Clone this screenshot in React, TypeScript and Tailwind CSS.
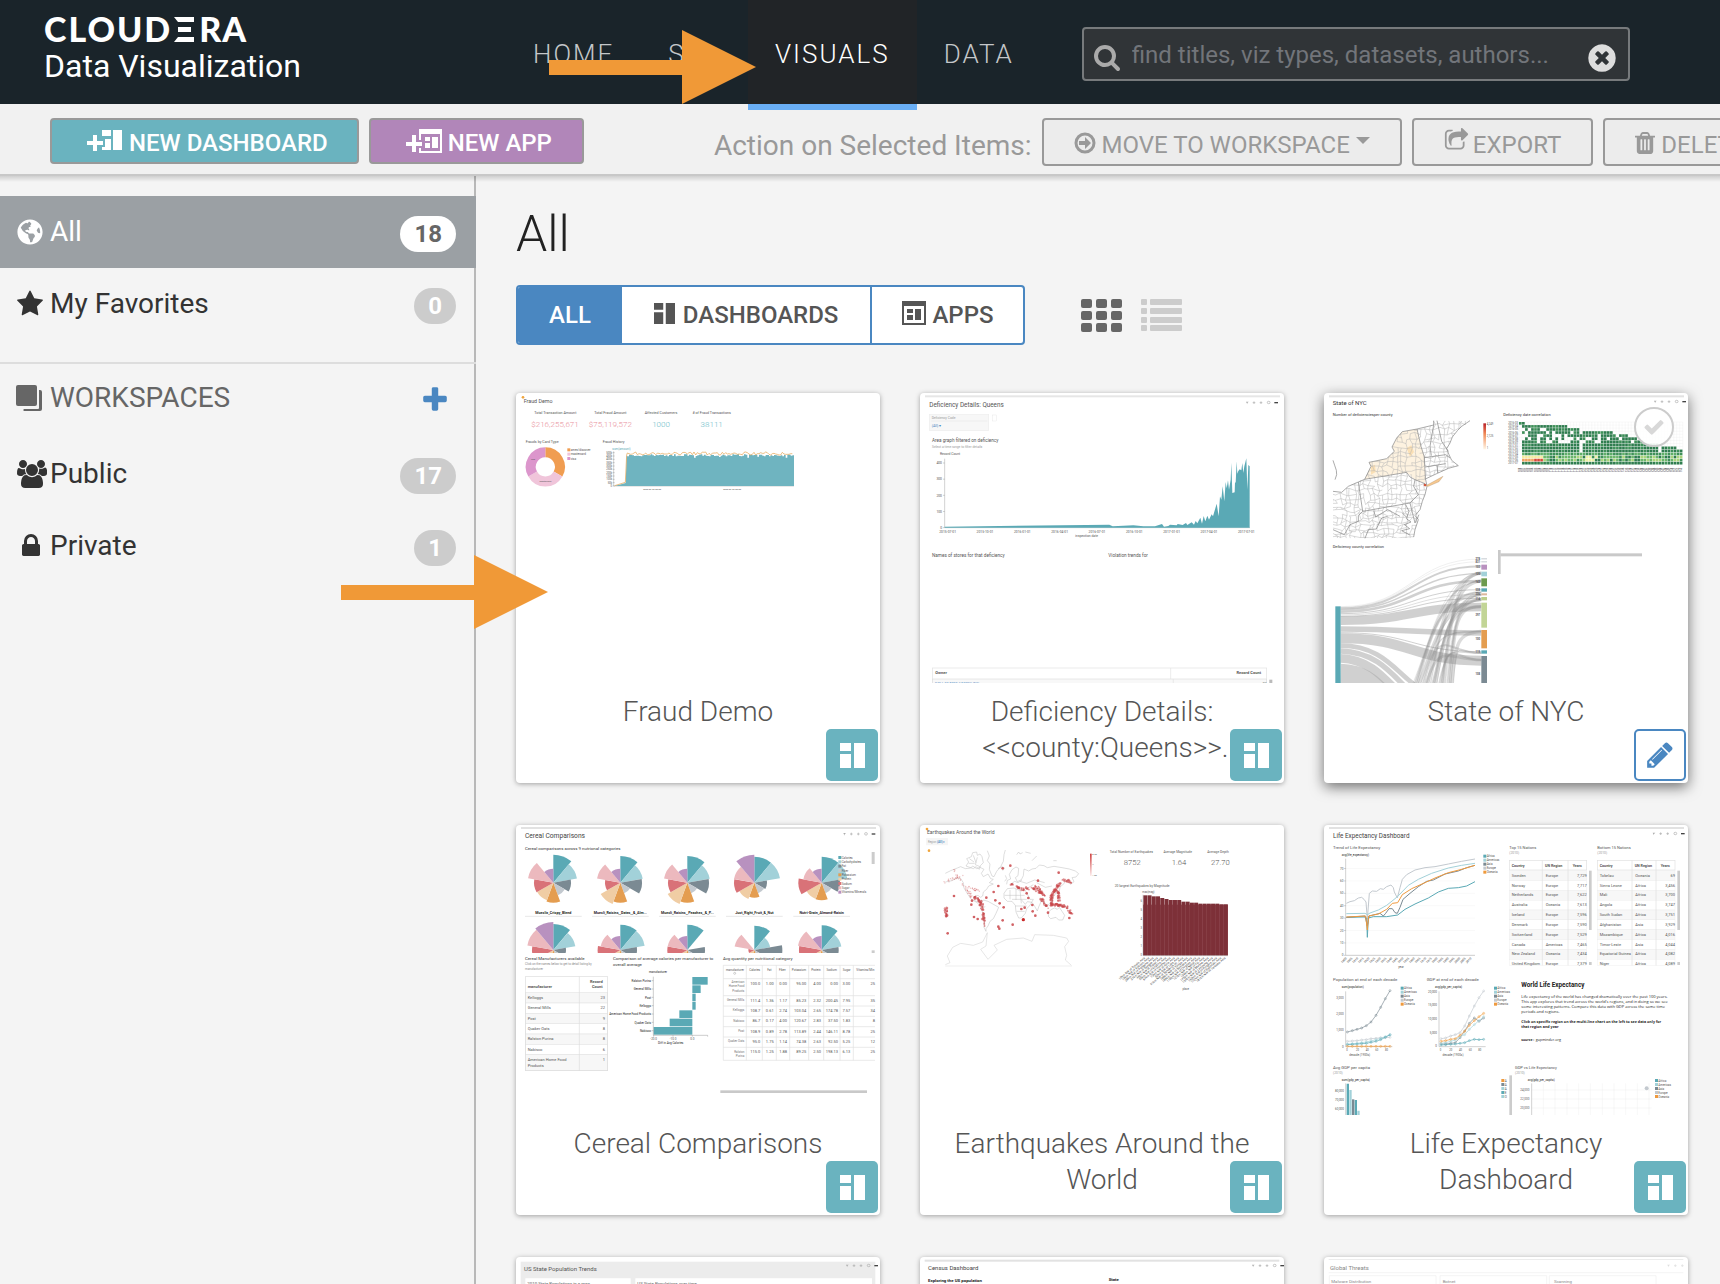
import type { ReactNode } from "react";
import { FaGlobeAmericas } from "react-icons/fa";

/* ---------- palette for the miniature charts ---------- */
const TEAL = "#5aa9b5";
const LIGHT_TEAL = "#a2d1d9";
const SLATE = "#7b8a93";
const SILVER = "#c3c9cf";
const ORANGE = "#e49d50";
const SAND = "#f0cda4";
const RED = "#d97278";
const PINK = "#ecb9be";
const PURPLE = "#b891bf";

function random(seed: number) {
  let s = seed;
  return () => {
    s = (s * 16807) % 2147483647;
    return s / 2147483647;
  };
}

/* ---------- icons ---------- */
const PATHS = {
  search:
    "M1216 832q0-185-131.500-316.500t-316.500-131.500-316.500 131.500-131.500 316.500 131.500 316.500 316.500 131.500 316.500-131.500 131.500-316.500zm512 832q0 52-38 90t-90 38q-54 0-90-38l-343-342q-179 124-399 124-143 0-273.500-55.500t-225-150-150-225-55.500-273.500 55.500-273.500 150-225 225-150 273.500-55.500 273.500 55.500 225 150 150 225 55.500 273.500q0 220-124 399l343 343q37 37 37 90z",
  clear:
    "M1277 1122q0-26-19-45l-181-181 181-181q19-19 19-45 0-27-19-46l-90-90q-19-19-46-19-26 0-45 19l-181 181-181-181q-19-19-45-19-27 0-46 19l-90 90q-19 19-19 46 0 26 19 45l181 181-181 181q-19 19-19 45 0 27 19 46l90 90q19 19 46 19 26 0 45-19l181-181 181 181q19 19 45 19 27 0 46-19l90-90q19-19 19-46zm387-226q0 209-103 385.500t-279.500 279.500-385.500 103-385.500-103-279.500-279.500-103-385.500 103-385.500 279.500-279.500 385.500-103 385.500 103 279.500 279.500 103 385.500z",
  star: "M1728 647q0 22-26 48l-363 354 86 500q1 7 1 20 0 21-10.500 35.500t-30.500 14.500q-19 0-40-12l-449-236-449 236q-22 12-40 12-21 0-31.500-14.500t-10.500-35.500q0-6 2-20l86-500-364-354q-25-27-25-48 0-37 56-46l502-73 225-455q19-41 49-41t49 41l225 455 502 73q56 9 56 46z",
  lock: "M640 768h512v-192q0-106-75-181t-181-75-181 75-75 181v192zm832 96v576q0 40-28 68t-68 28h-960q-40 0-68-28t-28-68v-576q0-40 28-68t68-28h32v-192q0-184 132-316t316-132 316 132 132 316v192h32q40 0 68 28t28 68z",
  plus: "M1600 736v192q0 40-28 68t-68 28h-416v416q0 40-28 68t-68 28h-192q-40 0-68-28t-28-68v-416h-416q-40 0-68-28t-28-68v-192q0-40 28-68t68-28h416v-416q0-40 28-68t68-28h192q40 0 68 28t28 68v416h416q40 0 68 28t28 68z",
  check:
    "M1671 566q0 40-28 68l-724 724-136 136q-28 28-68 28t-68-28l-136-136-362-362q-28-28-28-68t28-68l136-136q28-28 68-28t68 28l294 295 656-657q28-28 68-28t68 28l136 136q28 28 28 68z",
  pencil:
    "M491 1536l91-91-235-235-91 91v107h128v128h107zm523-928q0-22-22-22-10 0-17 7l-542 542q-7 7-7 17 0 22 22 22 10 0 17-7l542-542q7-7 7-17zm-54-192l416 416-832 832h-416v-416zm683 96q0 53-37 90l-166 166-416-416 166-165q36-38 90-38 53 0 91 38l235 234q37 39 37 91z",
  trash:
    "M704 1376v-704q0-14-9-23t-23-9h-64q-14 0-23 9t-9 23v704q0 14 9 23t23 9h64q14 0 23-9t9-23zm256 0v-704q0-14-9-23t-23-9h-64q-14 0-23 9t-9 23v704q0 14 9 23t23 9h64q14 0 23-9t9-23zm256 0v-704q0-14-9-23t-23-9h-64q-14 0-23 9t-9 23v704q0 14 9 23t23 9h64q14 0 23-9t9-23zm-544-992h448l-48-117q-7-9-17-11h-317q-10 2-17 11zm928 32v64q0 14-9 23t-23 9h-96v948q0 83-47 143.500t-113 60.500h-832q-66 0-113-58.500t-47-141.500v-952h-96q-14 0-23-9t-9-23v-64q0-14 9-23t23-9h309l70-167q15-37 54-63t79-26h320q40 0 79 26t54 63l70 167h309q14 0 23 9t9 23z",
  share:
    "M1472 989v259q0 119-84.5 203.500t-203.500 84.500h-832q-119 0-203.500-84.500t-84.500-203.500v-832q0-119 84.500-203.500t203.500-84.500h255q13 0 22.500 9.500t9.500 22.500q0 27-26 32-77 26-133 60-10 4-16 4h-112q-66 0-113 47t-47 113v832q0 66 47 113t113 47h832q66 0 113-47t47-113v-214q0-19 18-29 28-13 54-37 16-16 35-8 21 9 21 29zm237-496l-384 384q-18 19-45 19-12 0-25-5-39-17-39-59v-192h-160q-323 0-438 131-119 137-74 473 3 23-20 34-8 2-12 2-16 0-26-13-10-14-21-31t-39.500-68.500-49.500-99.500-38.500-114-17.500-122q0-49 3.500-91t14-90 28-88 47-81.500 68.500-74 94.500-61.500 124.500-48.500 159.500-30.500 196.500-11h160v-192q0-42 39-59 13-5 25-5 26 0 45 19l384 384q19 19 19 45t-19 45z",
};

function Glyph({ name, className, box = "0 0 1792 1792" }: { name: keyof typeof PATHS; className: string; box?: string }) {
  return (
    <svg viewBox={box} className={className} fill="currentColor" aria-hidden="true">
      <path d={PATHS[name]} />
    </svg>
  );
}

function UsersIcon() {
  return (
    <svg viewBox="0 0 1984 1792" className="h-[28px] w-[31px]" fill="currentColor" aria-hidden="true">
      <path d="M657 896q-162 5-265 128h-134q-82 0-138-40.5t-56-118.500q0-353 124-353 6 0 43.500 21t97.500 42.500 119 21.500q67 0 133-23-5 37-5 66 0 159 93 293zm1071 637q0 120-73 189.500t-194 69.500h-874q-121 0-194-69.500t-73-189.500q0-53 3.500-103.500t14-109 26.500-108.500 43-97.500 62-81 85.500-53.500 111.500-20q10 0 43 21.500t73 48 107 48 135 21.500 135-21.500 107-48 73-48 43-21.500q61 0 111.500 20t85.500 53.500 62 81 43 97.500 26.500 108.500 14 109 3.500 103.500zm-1024-1277q0 106-75 181t-181 75-181-75-75-181 75-181 181-75 181 75 75 181zm704 384q0 159-112.500 271.500t-271.500 112.500-271.500-112.500-112.500-271.500 112.500-271.500 271.500-112.500 271.500 112.500 112.500 271.500zm576 225q0 78-56 118.500t-138 40.500h-134q-103-123-265-128 93-134 93-293 0-29-5-66 66 23 133 23 59 0 119-21.500t97.500-42.500 43.500-21q124 0 124 353zm-128-609q0 106-75 181t-181 75-181-75-75-181 75-181 181-75 181 75 75 181z" />
    </svg>
  );
}

function DashboardIcon({ className }: { className: string }) {
  return (
    <svg viewBox="0 0 25 25" className={className} fill="currentColor" aria-hidden="true">
      <path d="M0 0h11v8H0zM0 11h11v14H0zM14 0h11v25H14z" />
    </svg>
  );
}

function AppIcon({ className }: { className: string }) {
  return (
    <svg viewBox="0 0 24 24" className={className} fill="currentColor" aria-hidden="true">
      <path fillRule="evenodd" d="M0 0h24v24H0zM2 5v17h20V5z" />
      <path d="M5 8h6v4H5zM5 14h6v5H5zM13 8h6v11h-6z" />
    </svg>
  );
}

function NewDashboardIcon() {
  return (
    <svg viewBox="0 0 36 22" className="h-[22px] w-[36px]" aria-hidden="true">
      <path fill="#fff" d="M15 0h9v6h-9zM15 9h9v11h-9zM26 0h9v20h-9z" />
      <path fill="#6ab3bf" d="M0 9h18v8H0z" />
      <path fill="#fff" d="M0 11h16v4H0zM6 5h4v16H6z" />
    </svg>
  );
}

function NewAppIcon() {
  return (
    <svg viewBox="0 0 36 24" className="h-[24px] w-[36px]" aria-hidden="true">
      <path fill="#fff" fillRule="evenodd" d="M13 0h23v24H13zM15 5v17h19V5z" />
      <path fill="#fff" d="M19 8h5v4h-5zM19 14h5v5h-5zM26 8h6v11h-6z" />
      <path fill="#b186b9" d="M0 11h17v8H0z" />
      <path fill="#fff" d="M0 13h16v4H0zM6 6h4v17H6z" />
    </svg>
  );
}

function GridIcon() {
  return (
    <svg viewBox="0 0 41 33" className="h-[33px] w-[41px]" fill="#666" aria-hidden="true">
      {[0, 12, 24].map((y) =>
        [0, 15, 30].map((x) => <rect key={x + "-" + y} x={x} y={y} width="11" height="9" rx="2" />)
      )}
    </svg>
  );
}

function ListIcon() {
  return (
    <svg viewBox="0 0 41 33" className="h-[33px] w-[41px]" fill="#ccc" aria-hidden="true">
      {[0, 9, 18, 26].map((y) => (
        <g key={y}>
          <rect x="0" y={y} width="6" height="6" rx="1" />
          <rect x="9" y={y} width="32" height="6" rx="1" />
        </g>
      ))}
    </svg>
  );
}

/* ---------- miniature building blocks ---------- */
type TextProps = {
  x: number;
  y: number;
  s?: number;
  fill?: string;
  end?: boolean;
  mid?: boolean;
  bold?: boolean;
  light?: boolean;
  children: ReactNode;
};
function T({ x, y, s = 12, fill = "#555", end, mid, bold, light, children }: TextProps) {
  return (
    <text
      x={x}
      y={y}
      fontSize={s}
      fill={fill}
      fontWeight={bold ? 700 : light ? 300 : 400}
      textAnchor={end ? "end" : mid ? "middle" : "start"}
    >
      {children}
    </text>
  );
}

function Thumb({ box, label, children }: { box: string; label: string; children: ReactNode }) {
  return (
    <svg viewBox={box} className="block w-full" role="img" aria-label={label}>
      {children}
    </svg>
  );
}

function Tools({ x, y }: { x: number; y: number }) {
  return (
    <g stroke="#aaa" strokeWidth="2" fill="none">
      <path d={`M${x - 4} ${y - 3}h8l-4 4v4z`} fill="#aaa" stroke="none" />
      <path d={`M${x + 16} ${y}h8m-4 -4v8M${x + 37} ${y}h8m-4 -4v8`} />
      <rect x={x + 60} y={y - 4} width="8" height="7" rx="3" />
      <path d={`M${x + 81} ${y}h11`} stroke="#444" strokeWidth="4" />
    </g>
  );
}

function Legend({ x, y, items, step = 12 }: { x: number; y: number; items: [string, string][]; step?: number }) {
  return (
    <g>
      {items.map(([name, color], i) => (
        <g key={name + i}>
          <rect x={x} y={y + i * step} width="9" height="9" fill={color} />
          <T x={x + 10} y={y + 8 + i * step} s={9}>
            {name}
          </T>
        </g>
      ))}
    </g>
  );
}

/* ---------- miniatures ---------- */
function FraudThumb() {
  const rnd = random(7);
  const top: string[] = [];
  const line: string[] = [];
  for (let x = 352; x < 850; x += 5) {
    const y = 204 + Math.round(rnd() * 6) + (rnd() > 0.92 ? 6 : 0);
    top.push(`L${x} ${y}H${x + 5}`);
    line.push(`L${x} ${197 + Math.round(rnd() * 9)}`);
  }
  return (
    <Thumb box="18 20 1092 870" label="Fraud Demo preview">
      <circle cx="39" cy="33" r="4" fill="#f0a53c" />
      <T x={41} y={49} s={16}>Fraud Demo</T>
      <T x={136} y={83} s={11} mid>Total Transaction Amount</T>
      <T x={301} y={83} s={11} mid>Total Fraud Amount</T>
      <T x={453} y={83} s={11} mid>Affected Customers</T>
      <T x={605} y={83} s={11} mid>{"# of Fraud Transactions"}</T>
      <T x={135} y={121} s={24} mid light fill="#e98f9a">$216,255,671</T>
      <T x={301} y={121} s={24} mid light fill="#e98f9a">$75,119,572</T>
      <T x={453} y={121} s={24} mid light fill="#6dbcc8">1000</T>
      <T x={605} y={121} s={24} mid light fill="#6dbcc8">38111</T>
      <T x={47} y={170} s={11}>Frauds by Card Type</T>
      <T x={278} y={170} s={11}>Fraud History</T>
      <g fill="none" strokeWidth="30">
        <path d="M106 198A43.500 43.500 0 0 1 144 263" stroke="#f09d51" />
        <path d="M144 263A43.500 43.500 0 0 1 68 263" stroke="#f0c5da" />
        <path d="M68 263A43.500 43.500 0 0 1 106 198" stroke="#dc96cc" />
      </g>
      <T x={69} y={222} s={7} mid>visa</T>
      <T x={106} y={288} s={7} mid>mastercard</T>
      <Legend x={172} y={186} step={13} items={[["amex/discover", "#f09d51"], ["mastercard", "#f0c5da"], ["visa", "#dc96cc"]]} />
      <T x={307} y={190} s={9} fill={TEAL}>sum(amount)</T>
      {[0, 1, 2, 3, 4, 5, 6, 7, 8, 9, 10].map((i) => (
        <g key={i}>
          <T x={306} y={302 - i * 10} s={8} end>{i === 0 ? "0" : `${i * 50}k`}</T>
          <path d={`M308 ${299 - i * 10}h6`} stroke="#777" />
        </g>
      ))}
      <path d="M311 195V299H852" stroke="#777" fill="none" />
      <path d={`M314 299L347 290L350 208${top.join("")}V299Z`} fill="#6fb4c0" />
      <path d={`M314 298L346 288L350 206${line.join("")}`} fill="none" stroke="#e3a04b" strokeWidth="2" />
      <T x={426} y={310} s={7} mid>2020-06-30 00:00</T>
      <T x={666} y={310} s={7} mid>2020-06-30 00:00</T>
    </Thumb>
  );
}

function DeficiencyThumb() {
  const dates = ["2015-07-01", "2015-10-01", "2016-01-01", "2016-04-01", "2016-07-01", "2016-10-01", "2017-01-01", "2017-04-01", "2017-07-01"];
  return (
    <Thumb box="30 20 1092 870" label="Deficiency Details preview">
      <rect x="45" y="27" width="1065" height="6" fill="#e6e6e6" />
      <T x={58} y={62} s={19}>Deficiency Details: Queens</T>
      <Tools x={1012} y={49} />
      <rect x="58" y="85" width="178" height="48" fill="#f7f7f7" stroke="#eee" strokeWidth="2" />
      <path d="M64 104h168" stroke="#ddd" />
      <T x={65} y={98} s={10} fill="#999">Deficiency Code</T>
      <T x={65} y={123} s={11} fill="#4a87c1">(All) ▾</T>
      <rect x="247" y="86" width="13" height="18" fill="none" stroke="#ddd" />
      <T x={66} y={166} s={14}>Area graph filtered on deficiency</T>
      <T x={66} y={186} s={10} fill="#999">Select a time range to filter details</T>
      <T x={90} y={207} s={10}>Record Count</T>
      {[0, 100, 200, 300, 400].map((v) => (
        <g key={v}>
          <T x={96} y={428 - v * 0.485} s={10} end>{v}</T>
          <path d={`M99 ${424 - v * 0.485}h5`} stroke="#777" />
        </g>
      ))}
      <path d="M104 217V424H1020" fill="none" stroke="#777" />
      <path
        fill={TEAL}
        d="M104 424V421L598 415L608 420L640 418L670 417L700 420L735 420L756 413L762 421L775 419L780 415L800 417L803 413L818 416L828 410L832 416L845 408L852 415L857 404L862 411L871 394L876 412L881 389L886 405L892 388L897 400L905 384L909 390L920 352L926 390L930 330L934 340L938 300L943 345L947 287L950 306L954 282L957 310L962 280L964 229L967 320L974 318L975 287L977 290L980 225L982 262L985 254L989 249L994 252L997 230L1000 260L1003 240L1009 216L1012 310L1015 236L1019 240V424Z"
      />
      {dates.map((d, i) => (
        <T key={d} x={113 + i * 112} y={439} s={10} mid>{d}</T>
      ))}
      <T x={530} y={451} s={10} mid>inspection date</T>
      <T x={66} y={512} s={14}>Names of stores for that deficiency</T>
      <T x={595} y={512} s={14}>Violation trends for</T>
      <rect x="67" y="845" width="1003" height="60" fill="none" stroke="#e2e2e2" strokeWidth="2" />
      <rect x="67" y="878" width="1003" height="20" fill="#f8f8f8" stroke="#ddd" strokeWidth="2" />
      <path d="M782 845v33M790 878v20" stroke="#e2e2e2" strokeWidth="2" />
      <T x={76} y={864} s={12} bold>Owner</T>
      <T x={1053} y={864} s={12} end bold>Record Count</T>
      <T x={75} y={897} s={11} fill="#4a87c1">DOLLAR TREE STORES INC</T>
      <T x={1070} y={897} s={11} end>32</T>
      <rect x="1078" y="880" width="9" height="10" fill="#bbb" />
    </Thumb>
  );
}

const LAND =
  "M149 279L168 240L162 228L215 217L238 195L231 182L245 155L262 136L306 128L356 116L354 103H440L465 103L450 116L428 130L412 152L405 170L395 187L402 205L405 220L430 238L400 246L395 250L365 262L331 275L336 300L330 325L322 345L315 370L310 400L300 430L296 456H54V315L80 318L100 300L130 285Z";

function countyMesh() {
  const rnd = random(11);
  const pts: [number, number][][] = [];
  for (let r = 0; r < 30; r++) {
    const row: [number, number][] = [];
    for (let c = 0; c < 32; c++) {
      const y = r > 18 ? 100 + 18 * 14 + (r - 18) * 11 : 100 + r * 14;
      row.push([50 + c * 14 + (rnd() - 0.5) * 11, y + (rnd() - 0.5) * 10]);
    }
    pts.push(row);
  }
  let d = "";
  for (let r = 0; r < 29; r++)
    for (let c = 0; c < 31; c++) {
      const p = pts[r][c];
      const right = pts[r][c + 1];
      const down = pts[r + 1][c];
      if (rnd() > 0.14) d += `M${p[0].toFixed(0)} ${p[1].toFixed(0)}L${right[0].toFixed(0)} ${right[1].toFixed(0)}`;
      if (rnd() > 0.14) d += `M${p[0].toFixed(0)} ${p[1].toFixed(0)}L${down[0].toFixed(0)} ${down[1].toFixed(0)}`;
    }
  return d;
}

const SANKEY_NODES: [number, number, string, string][] = [
  [516, 3, SILVER, "278"],
  [525, 3, SILVER, "831"],
  [535, 15, PURPLE, "103"],
  [556, 14, LIGHT_TEAL, "125"],
  [576, 24, "#6d9a4e", "142"],
  [606, 10, TEAL, "508"],
  [621, 6, "#dcb79c", "306"],
  [632, 10, "#bccf8b", "114"],
  [649, 75, "#c2d596", "397"],
  [731, 55, ORANGE, "100"],
  [792, 10, TEAL, "119"],
  [809, 110, SLATE, "108"],
];

/* Links that leave the left bar: [left y, width, right y] */
const SANKEY_LINKS: [number, number, number][] = [
  [661, 1, 518],
  [663, 1, 526],
  [666, 6, 540],
  [670, 4, 562],
  [676, 8, 584],
  [682, 3, 610],
  [686, 2, 624],
  [690, 3, 636],
  [703, 26, 662],
  [728, 16, 740],
  [739, 3, 796],
  [756, 30, 823],
];

function NycThumb() {
  const rnd = random(5);
  const limits = [2, 16, 20, 31, 36, 39, 41, 46, 52, 54, 54, 54, 54, 54];
  const cells: ReactNode[] = [];
  limits.forEach((limit, r) => {
    for (let c = r === 0 ? 0 : 1; c < limit; c++) {
      const gap = r > 1 && r < 7 && rnd() < (c < limit - 9 ? 0.38 : 0.02);
      if (gap || (r > 6 && (c === 20 || c === 46) && r < 10)) continue;
      let fill = rnd() > 0.25 ? "#2f7d4f" : "#3f9159";
      if (r === 10) fill = rnd() > 0.5 ? "#5fae69" : "#3f9159";
      if (r === 11 || r === 12) {
        if (c < 8) fill = r === 11 ? "#f6eb9f" : c > 4 ? "#d9473a" : "#f3a25f";
        else if (rnd() > 0.3) fill = c > 21 && c < 27 ? "#eef2a4" : rnd() > 0.5 ? "#a9d47a" : "#6ab56a";
      }
      cells.push(<rect key={`${r}-${c}`} x={612 + c * 9.1} y={107 + r * 9.2} width="8" height="8" fill={fill} />);
    }
  });
  return (
    <Thumb box="27 20 1092 870" label="State of NYC preview">
      <defs>
        <clipPath id="nyc-land">
          <path d={LAND} />
        </clipPath>
        <linearGradient id="nyc-scale" x1="0" y1="0" x2="0" y2="1">
          <stop offset="0" stopColor="#b9202a" />
          <stop offset="0.4" stopColor="#f08a57" />
          <stop offset="1" stopColor="#fff6e6" />
        </linearGradient>
      </defs>
      <rect x="42" y="27" width="1065" height="6" fill="#e2e2e2" />
      <T x={53} y={57} s={18} fill="#333">State of NYC</T>
      <Tools x={1021} y={46} />
      <T x={53} y={89} s={12} fill="#333">Number of deficienciesper county</T>
      <T x={565} y={89} s={12} fill="#333">Deficiency date correlation</T>
      <path
        fill="#fdf2e0"
        d="M149 279L168 240L162 228L215 217L238 195L231 182L245 155L262 136L306 128L318 180L328 212L331 290L300 280L275 258Z"
      />
      <path fill="#fbe0b5" d="M168 240l12-5 2 22-14 8zM275 185l14-8 8 20-12 14z" />
      <g clipPath="url(#nyc-land)" fill="none">
        <path d={countyMesh()} stroke="#b4b4b4" strokeWidth="1.5" />
      </g>
      <g fill="none" stroke="#808080" strokeWidth="2">
        <path d="M54 315L80 318L100 300L130 287L149 279L168 240L162 228L215 217L238 195L231 182L245 155L262 136L306 128L356 116V103" />
        <path d="M149 279L275 258L285 272L300 280L296 300L310 325L285 350L143 375L130 287M300 280L330 292M306 128L318 180L328 212L331 275M356 116L345 180L349 208M366 103L380 165L400 195M328 214L392 205L405 215M330 242L392 232M366 236L368 260" />
        <path d="M143 375L130 388V405L105 415L88 445L54 430M176 373L182 392L218 370L255 390M218 390L200 395L184 428L160 430L150 456" />
        <path d="M331 275L336 300L330 325L322 345L315 370L300 388L310 400L300 430L296 452M465 103L440 120L428 132L412 152L405 170L395 187L402 205L410 222L430 238L400 246L365 262L331 278M285 350L300 410L312 385" />
        <path d="M272 355l10 20-8 22 14 10-20 8 16 12-24 6 26 14M262 380l12 12M54 222q6 18 10 30t-4 28" />
      </g>
      <path d="M331 299L384 270L372 286L340 300Z" fill="#f6c88f" stroke="#a98d6c" />
      <circle cx="330" cy="296" r="4" fill="#d4583f" />
      <rect x="505" y="111" width="8" height="78" fill="url(#nyc-scale)" />
      <T x={515} y={115} s={8}>4,249</T>
      <T x={515} y={152} s={8}>2,125</T>
      <T x={515} y={188} s={8}>1</T>
      <g stroke="#eee">
        {[0, 1, 2, 3, 4, 5, 6, 7, 8, 9].map((i) => (
          <path key={i} d={`M612 ${107 + i * 9.2}H1103`} />
        ))}
        {Array.from({ length: 55 }, (_, i) => (
          <path key={i} d={`M${612 + i * 9.1} 107v90`} />
        ))}
      </g>
      {cells}
      {limits.map((_, i) => (
        <T key={i} x={609} y={114 + i * 9.2} s={8} end>{i < 7 ? `2016-0${i + 3}` : `2017-0${i - 6}`}</T>
      ))}
      {Array.from({ length: 54 }, (_, i) => (
        <text key={i} fontSize="8" fill="#333" transform={`translate(${619 + i * 9.1} 258) rotate(-90)`}>
          {100 + i}
        </text>
      ))}
      <T x={53} y={485} s={12} fill="#333">Deficiency county correlation</T>
      <g fill="none" stroke="#aaa" strokeOpacity="0.55">
        {SANKEY_LINKS.map(([y0, w, y1]) => (
          <path key={y0} strokeWidth={w} d={`M77 ${y0}C290 ${y0} 290 ${y1} 499 ${y1}`} />
        ))}
        <path strokeWidth="14" d="M77 778C220 778 250 880 350 930" />
        <path strokeWidth="16" d="M77 794C200 798 240 880 310 940" />
        <path strokeWidth="26" d="M77 816C170 820 210 880 270 940" />
        <path strokeWidth="60" d="M77 862C130 864 170 880 220 950" />
      </g>
      <g fill="none" stroke="#888" strokeOpacity="0.3">
        {Array.from({ length: 26 }, (_, i) => {
          const target = SANKEY_NODES[3 + (i % 9)];
          return (
            <path
              key={i}
              strokeWidth={2 + (i % 5) * 2}
              d={`M${290 + i * 5} 900C${350 + i * 3} ${760 - (i % 4) * 20} ${380 + i * 2} ${target[0] + 12} 499 ${target[0] + 4 + (i % 3) * 4}`}
            />
          );
        })}
      </g>
      <rect x="61" y="660" width="16" height="240" fill={TEAL} />
      {SANKEY_NODES.map(([y, h, color, label]) => (
        <g key={y}>
          <rect x="499" y={y} width="17" height={h} fill={color} />
          <T x={495} y={Math.min(y + h / 2 + 3, 872)} s={8} end bold>{label}</T>
        </g>
      ))}
      <rect x="549" y="491" width="8" height="72" fill="#c9c9c9" />
      <rect x="556" y="501" width="425" height="9" fill="#c9c9c9" />
    </Thumb>
  );
}

const ROSE_COLORS = [TEAL, LIGHT_TEAL, SLATE, SILVER, ORANGE, SAND, RED, PINK, PURPLE];
function Rose({ cx, cy, r }: { cx: number; cy: number; r: number[] }) {
  return (
    <g>
      {r.map((len, i) => {
        const a = (i * 40 - 90) * (Math.PI / 180);
        const b = ((i + 1) * 40 - 90) * (Math.PI / 180);
        const p = (t: number) => `${(cx + len * Math.cos(t)).toFixed(1)} ${(cy + len * Math.sin(t)).toFixed(1)}`;
        return <path key={i} fill={ROSE_COLORS[i]} d={`M${cx} ${cy}L${p(a)}A${len} ${len} 0 0 1 ${p(b)}Z`} />;
      })}
    </g>
  );
}

function CerealThumb() {
  const roses: [number, string, number[]][] = [
    [130, "Mueslix_Crispy_Blend", [84, 72, 53, 40, 60, 56, 58, 77, 42]],
    [331, "Muesli_Raisins,_Dates,_&_Alm...", [80, 68, 65, 34, 60, 68, 46, 71, 42]],
    [532, "Muesli_Raisins,_Peaches,_&_P...", [80, 68, 65, 34, 60, 68, 58, 71, 42]],
    [733, "Just_Right_Fruit_&_Nut", [78, 78, 38, 34, 45, 52, 61, 62, 84]],
    [935, "Nutri-Grain_Almond-Raisin", [78, 78, 55, 34, 53, 52, 70, 56, 42]],
  ];
  const lower: number[][] = [
    [78, 67, 38, 34, 40, 40, 64, 79, 84],
    [76, 74, 50, 34, 40, 40, 68, 60, 42],
    [76, 0, 53, 34, 40, 40, 60, 60, 42],
    [73, 48, 84, 34, 20, 20, 18, 60, 0],
    [74, 60, 51, 34, 40, 40, 68, 72, 42],
  ];
  const makers: [string, string][] = [["Kelloggs", "23"], ["General Mills", "22"], ["Post", "9"], ["Quaker Oats", "8"], ["Ralston Purina", "8"], ["Nabisco", "6"], ["American Home Food", "1"]];
  const bars: [string, number, number][] = [["Ralston Purina", 547, 593], ["General Mills", 547, 572], ["Post", 547, 557], ["Kelloggs", 547, 557], ["American Home Food Products", 508, 547], ["Quaker Oats", 479, 547], ["Nabisco", 431, 547]];
  const heads: [string, number][] = [["manufacturer", 675], ["Calories", 734], ["Fat", 778], ["Fiber", 817], ["Potassium", 867], ["Protein", 918], ["Sodium", 965], ["Sugar", 1010], ["Vitamins/Min", 1066]];
  const rows: [number, string, string[]][] = [
    [506, "Home Food", ["100.0", "1.00", "0.00", "95.00", "4.00", "0.00", "3.00", "25"]],
    [557, "General Mills", ["111.4", "1.36", "1.17", "85.23", "2.32", "200.45", "7.95", "35"]],
    [588, "Kelloggs", ["108.7", "0.61", "2.74", "103.04", "2.65", "174.78", "7.57", "34"]],
    [619, "Nabisco", ["86.7", "0.17", "4.00", "120.67", "2.83", "37.50", "1.83", "8"]],
    [650, "Post", ["108.9", "0.89", "2.78", "113.89", "2.44", "146.11", "8.78", "25"]],
    [681, "Quaker Oats", ["95.0", "1.75", "1.14", "74.38", "2.63", "92.50", "5.25", "12"]],
    [712, "Ralston", ["115.0", "1.25", "1.88", "89.25", "2.50", "198.13", "6.13", "25"]],
  ];
  const cols = [751, 791, 831, 889, 933, 984, 1021, 1095];
  return (
    <Thumb box="18 27 1092 870" label="Cereal Comparisons preview">
      <defs>
        <clipPath id="cereal-row">
          <rect x="18" y="300" width="1092" height="111" />
        </clipPath>
      </defs>
      <rect x="33" y="33" width="1065" height="6" fill="#e2e2e2" />
      <T x={45} y={66} s={20} fill="#444">Cereal Comparisons</T>
      <Tools x={1004} y={54} />
      <T x={45} y={101} s={13} fill="#333">Cereal comparisons across 9 nutrional categories</T>
      {roses.map(([x, name, r]) => (
        <g key={name}>
          <Rose cx={x} cy={200} r={r} />
          <T x={x} y={293} s={11} mid bold fill="#222">{name}</T>
          <path d={`M${x - 85} 301h170`} stroke="#ddd" strokeWidth="2" />
        </g>
      ))}
      <g clipPath="url(#cereal-row)">
        {lower.map((r, i) => (
          <Rose key={i} cx={roses[i][0]} cy={402} r={r} />
        ))}
      </g>
      <Legend
        x={985}
        y={120}
        step={13}
        items={[["Calories", TEAL], ["Carbohydrates", LIGHT_TEAL], ["Fat", SLATE], ["Fiber", SILVER], ["Potassium", ORANGE], ["Protein", SAND], ["Sodium", RED], ["Sugar", PINK], ["Vitamins/Minerals", PURPLE]]}
      />
      <rect x="1085" y="108" width="9" height="36" fill="#ccc" />
      <rect x="1085" y="403" width="9" height="8" fill="#ccc" />
      <T x={45} y={431} s={13} fill="#333">Cereal Manufacturers available</T>
      <T x={45} y={448} s={9} fill="#888">Click on the names below to get to detail listing by</T>
      <T x={45} y={462} s={9} fill="#888">manufacturer</T>
      <g stroke="#ddd" strokeWidth="2" fill="none">
        {makers.map((_, i) => (
          <rect key={i} x="46" y={530 + i * 31} width="247" height={i === 6 ? 48 : 31} fill={i % 2 ? "#fff" : "#f7f7f7"} stroke="#e6e6e6" />
        ))}
        <rect x="46" y="482" width="247" height="282" />
        <path d="M208 482v282" />
      </g>
      <T x={53} y={517} s={12} bold>manufacturer</T>
      <T x={278} y={500} s={12} bold end>Record</T>
      <T x={278} y={517} s={12} bold end>Count</T>
      {makers.map(([name, n], i) => (
        <g key={name}>
          <T x={53} y={549 + i * 31} s={12}>{name}</T>
          <T x={285} y={549 + i * 31} s={12} end>{n}</T>
        </g>
      ))}
      <T x={53} y={752} s={12}>Products</T>
      <T x={309} y={431} s={13} fill="#333">Comparison of average calories per manufacturer to</T>
      <T x={309} y={449} s={13} fill="#333">overall average</T>
      <T x={444} y={472} s={9} mid fill="#222">manufacturer</T>
      {bars.map(([name, a, b], i) => (
        <g key={name}>
          <rect x={a} y={483 + i * 25} width={b - a} height="23" fill={TEAL} />
          <T x={423} y={498 + i * 25} s={9} end fill="#222">{name}</T>
          <path d={`M425 ${494 + i * 25}h5`} stroke="#666" />
        </g>
      ))}
      <path d="M430 482V658H593M431 658v4M489 658v4M547 658v4M593 658v4" stroke="#666" fill="none" />
      <T x={431} y={671} s={9} mid>-20.0</T>
      <T x={489} y={671} s={9} mid>-10.0</T>
      <T x={547} y={671} s={9} mid>0.0</T>
      <T x={482} y={683} s={9} mid fill="#222">Diff in Avg Calories</T>
      <T x={639} y={431} s={13} fill="#333">Avg quantity per nutritional category</T>
      <g stroke="#e0e0e0" strokeWidth="2" fill="none">
        <path d="M1095 448H640V733H1095M640 488H1095M640 539H1095M640 570H1095M640 601H1095M640 632H1095M640 663H1095M640 694H1095M709 448V733M757 448V733M799 448V733M839 448V733M896 448V733M941 448V733M990 448V733M1030 448V733" />
      </g>
      {heads.map(([h, x]) => (
        <T key={h} x={x} y={464} s={9} mid>{h}</T>
      ))}
      <circle cx="674" cy="472" r="3" fill="none" stroke="#777" />
      {rows.map(([y, name, values]) => (
        <g key={name}>
          <T x={703} y={y + (name === "Home Food" ? 8 : -2)} s={9} end fill="#777">{name}</T>
          {values.map((v, i) => (
            <T key={i} x={cols[i]} y={y} s={12} end>{v}</T>
          ))}
        </g>
      ))}
      <T x={703} y={502} s={9} end fill="#777">American</T>
      <T x={703} y={527} s={9} end fill="#777">Products</T>
      <T x={703} y={722} s={9} end fill="#777">Purina</T>
      <rect x="631" y="823" width="440" height="8" fill="#c9c9c9" />
    </Thumb>
  );
}

const QUAKE_ARCS: [number, number, number, number, number][] = [
  [106, 198, 158, 178, 20],
  [130, 160, 158, 205, 14],
  [160, 208, 205, 225, 22],
  [165, 212, 185, 240, 18],
  [195, 244, 218, 262, 26],
  [212, 258, 222, 310, 30],
  [218, 300, 224, 328, 10],
  [108, 275, 108, 300, 26],
  [305, 205, 345, 225, 24],
  [345, 215, 378, 222, 18],
  [375, 205, 398, 235, 22],
  [385, 225, 405, 240, 18],
  [395, 250, 412, 275, 22],
  [425, 268, 425, 235, 34],
  [428, 235, 450, 200, 34],
  [458, 192, 484, 198, 16],
  [425, 266, 468, 270, 38],
  [468, 272, 484, 292, 12],
  [446, 225, 446, 255, 20],
];
const QUAKES: [number, number][] = [
  [278, 157], [301, 149], [446, 170], [265, 210], [251, 228], [229, 245], [256, 253], [269, 262], [281, 274], [132, 240], [186, 254], [184, 266], [192, 303], [203, 309], [278, 313], [308, 326], [355, 246], [350, 232], [384, 194], [367, 267], [368, 286], [376, 299], [334, 279], [344, 275], [113, 352], [265, 332], [268, 338], [414, 290], [478, 306], [482, 291],
];
const REGIONS = ["Tobelo", "Kokopo", "Panguna", "Iquique", "Illapel", "Kirakira", "Honshu", "Apia", "Lata", "Sandwich Isl.", "Tonga", "Sumatra", "Chiapas", "Nepal", "Fiji", "Muisne", "Lampung", "Porgera", "Saumlaki", "Vanuatu"];

function EarthquakeThumb() {
  const rnd = random(23);
  const dots: [number, number, number][] = [];
  QUAKE_ARCS.forEach(([x1, y1, x2, y2, n]) => {
    for (let i = 0; i < n; i++) {
      const t = rnd();
      dots.push([x1 + (x2 - x1) * t + (rnd() - 0.5) * 8, y1 + (y2 - y1) * t + (rnd() - 0.5) * 8, 2 + rnd() * 2]);
    }
  });
  const tops = [238, 238, 241, 241, 246, 249, 252, 252, 252, 257, 257, 260, 260, 263, 263, 263, 263, 263, 265, 265];
  return (
    <Thumb box="30 27 1092 870" label="Earthquakes Around the World preview">
      <defs>
        <linearGradient id="quake-scale" x1="0" y1="0" x2="0" y2="1">
          <stop offset="0" stopColor="#cf3f3f" />
          <stop offset="1" stopColor="#fdeeee" />
        </linearGradient>
      </defs>
      <circle cx="51" cy="39" r="4" fill="#f0a53c" />
      <T x={51} y={53} s={15}>Earthquakes Around the World</T>
      <rect x="48" y="66" width="66" height="22" rx="2" fill="#f5f5f5" />
      <T x={54} y={80} s={8} fill="#999">Region</T>
      <T x={81} y={80} s={9} bold fill="#4a87c1">(All) ▾</T>
      <circle cx="57" cy="104" r="4" fill="#f0a53c" />
      <g fill="none" stroke="#bdbdbd" strokeWidth="1.5">
        <path d="M106 172l16-8 20-8 10-4 14 6 16-2 6-6 12 8 10-4 12 6-8 12 6 10 14-8 8 14 8 2-12 10 12 4-14 6-6 10-10 8-2 12-6 4-8-6-12 4 2 12 10 4 6-4 2 12 8 8 6-2" />
        <path d="M106 198l20-4 14-8 12 2 8 12 2 16 12 20 10 14 14 8 8 6" />
        <path d="M168 150l8-12-6-10 14-6 4-12 12-2 2 10 8-4 6 8 4 18-8 8-4 12-10-8-8 6zM178 128l14 10M190 118l8 22M176 142h18M202 124l-6 22 14 6" />
        <path d="M232 104l6 16-6 14 8 10-2 16 8 20 6 2 8-16 12-14 8-16 2-20 4-14" />
        <path d="M212 262l8-10 14 4 18 10 14 8-8 18-8 16-10 8-6 14-6 8v8l-6-12 2-24-4-18-8-14z" />
        <path d="M290 205l2-12 10-4-4-14 8-14 12-8 8 4-2 22-8 6 6 12 12-6 6-12 2-20 14 6 10-6 12-2 10-10 14 2 10 6 20-4 24 4 22 4 18 6 10 8-8 10-12 2 6 12-10 8-14-12-6 10-12 10-2 12-10 4-4 8-8 10 2 10-10 6-8 10-6-14-10-4-8 18-4 12-8-14-8-12-14-2-6 8-12-14" />
        <path d="M282 232l10-14 20-2 14 6 18-2 8 14 8 16 10 0-10 18-10 10-4 14-12 14-8 0-8-18-2-20-10-12-14 0-10-10zM300 222v28M318 218v34M284 238h60M330 222l4 40M306 250h44M316 270h34M320 286h24" />
        <path d="M414 290l10-10 10-4 8 4 6-6 8 12 8 12-6 14-12 0-8-8-16 4-6-6zM300 206l14-10 10 4 12-8M330 196l20 6 24-10 30 8M350 218l20-12M380 200l26 14 20-4M284 196l6-8-4-10" />
        <path d="M320 116l6-8 4 6 8-4M366 134l14-14M346 108l16 4M430 134h10M264 158l12-6 8 4-6 8" />
        <path d="M106 446L120 440L112 420L128 394L152 382L190 388L218 378L232 350L228 390L212 400L234 430L262 402L252 388L290 370L340 366L366 376L374 356L430 358L470 366L476 376L464 392L470 418L466 432L484 448" stroke="#ccc" />
        <path d="M106 450H486" stroke="#ddd" />
      </g>
      <g fill="#c9474a">
        {dots.map(([x, y, r], i) => (
          <circle key={i} cx={x} cy={y} r={x < 210 && y < 240 ? 2 : r} fillOpacity={x < 210 && y < 240 ? 0.35 : 0.55} />
        ))}
        {QUAKES.map(([x, y]) => (
          <circle key={x + "-" + y} cx={x} cy={y} r="4" fillOpacity="0.85" />
        ))}
        <circle cx="340" cy="311" r="5" fill="#c92a2a" />
      </g>
      <rect x="540" y="113" width="5" height="67" fill="url(#quake-scale)" />
      <T x={547} y={117} s={7}>8.20</T>
      <T x={547} y={148} s={7}>4</T>
      <T x={547} y={181} s={7}>1.00</T>
      <T x={664} y={111} s={10} mid>Total Number of Earthquakes</T>
      <T x={803} y={111} s={10} mid>Average Magnitude</T>
      <T x={924} y={111} s={10} mid>Average Depth</T>
      <T x={667} y={146} s={23} mid light>8752</T>
      <T x={807} y={146} s={23} mid light>1.64</T>
      <T x={931} y={146} s={23} mid light>27.70</T>
      <T x={614} y={214} s={10}>20 largest Earthquakes by Magnitude</T>
      <T x={697} y={232} s={8}>max(mag)</T>
      <rect x="699" y="266" width="255" height="152" fill="#9a5a62" />
      {tops.map((y, i) => (
        <rect key={i} x={700 + i * 12.7} y={y} width="12" height={418 - y} fill="#7d3038" />
      ))}
      <path d="M699 236V419H954" stroke="#888" fill="none" />
      {[0, 1, 2, 3, 4, 5, 6].map((i) => (
        <T key={i} x={696} y={421 - i * 27} s={8} end>{i}</T>
      ))}
      {REGIONS.map((name, i) => (
        <text key={name} fontSize="9" fill="#333" textAnchor="end" transform={`translate(${706 + i * 12.7} 427) rotate(-40)`}>
          {`${10 + i * 9}km NW of ${name}, Asia`}
        </text>
      ))}
      <T x={827} y={521} s={8} mid>place</T>
    </Thumb>
  );
}

const CONTINENTS: [string, string][] = [["Africa", TEAL], ["Americas", LIGHT_TEAL], ["Asia", SLATE], ["Europe", SILVER], ["Oceania", "#ef9a3d"]];

function NationTable({ x, c2, c3, right, rows }: { x: number; c2: number; c3: number; right: number; rows: [string, string, string][] }) {
  return (
    <g>
      <rect x={x} y="133" width={right - x} height="29" fill="#fff" stroke="#e0e0e0" strokeWidth="2" />
      {rows.map((_, i) => (
        <rect key={i} x={x} y={164 + i * 29.5} width={right - x} height={i === 9 ? 18 : 29.5} fill={i % 2 ? "#fff" : "#f7f7f7"} stroke="#e8e8e8" />
      ))}
      <path d={`M${c2 - 8} 133V448M${c3 - 12} 133V448`} stroke="#e0e0e0" strokeWidth="2" />
      <T x={x + 7} y={152} s={11} bold>Country</T>
      <T x={c2} y={152} s={11} bold>UN Region</T>
      <T x={c3 + 2} y={152} s={11} bold>Years</T>
      {rows.map(([a, b, c], i) => (
        <g key={a}>
          <T x={x + 7} y={182 + i * 29.5} s={12}>{a}</T>
          <T x={c2 + 2} y={182 + i * 29.5} s={12}>{b}</T>
          <T x={right} y={182 + i * 29.5} s={12} end>{c}</T>
        </g>
      ))}
      <rect x={right + 7} y="164" width="8" height="178" fill="#ccc" />
      <rect x={right + 7} y="438" width="8" height="9" fill="#ccc" />
    </g>
  );
}

function Series({ pts, color, w = 2 }: { pts: string; color: string; w?: number }) {
  return (
    <g>
      <polyline points={pts} fill="none" stroke={color} strokeWidth={w} />
      {pts.split(" ").map((p) => {
        const [x, y] = p.split(",");
        return <circle key={p} cx={x} cy={y} r="3" fill="none" stroke={color} strokeWidth="1.5" />;
      })}
    </g>
  );
}

function LifeThumb() {
  return (
    <Thumb box="27 27 1092 870" label="Life Expectancy Dashboard preview">
      <rect x="42" y="33" width="1065" height="6" fill="#e2e2e2" />
      <T x={54} y={65} s={19} fill="#444">Life Expectancy Dashboard</T>
      <Tools x={1017} y={53} />
      <T x={54} y={98} s={13}>Trend of Life Expectancy</T>
      <T x={80} y={121} s={9} fill="#222">avg(life_expectancy)</T>
      {[0, 1, 2, 3, 4, 5, 6, 7].map((i) => (
        <g key={i}>
          <path d={`M92 ${418 - i * 37.2}H480`} stroke="#eee" />
          <path d={`M87 ${418 - i * 37.2}h5`} stroke="#777" />
          <T x={85} y={421 - i * 37.2} s={9} end>{i * 10}</T>
        </g>
      ))}
      <path d="M92 128V418H480" fill="none" stroke="#777" />
      <g fill="none" strokeWidth="3">
        <path stroke={SILVER} d="M94 262L105 257L118 254L130 246L140 244L147 250L153 258L157 310L163 232L172 225L185 226L196 218L205 220L215 212L228 207L235 215L238 228L247 246L255 215L262 190L275 176L300 162L330 155L360 152L400 144L440 136L480 129" />
        <path stroke={LIGHT_TEAL} d="M94 293L150 292L157 296L165 291L190 282L215 268L240 248L255 234L280 208L310 190L350 172L400 156L440 148L480 142" />
        <path stroke={TEAL} d="M94 304L150 303L155 306L157 364L160 306L175 302L215 302L248 297L270 280L300 264L340 246L370 228L400 217L430 215L455 210L480 197" />
        <path stroke={SLATE} d="M94 304L150 300L157 330L162 300L195 292L205 300L212 292L222 278L232 278L240 290L247 292L255 274L264 250L285 232L310 212L335 196L355 192L390 174L430 165L455 155L480 148" />
        <path stroke="#ef9a3d" d="M94 303L152 300L157 342L161 300L190 294L215 280L232 262L248 260L262 236L290 218L330 200L360 186L400 170L440 160L480 148" />
      </g>
      <Legend x={505} y={116} items={CONTINENTS} />
      {Array.from({ length: 23 }, (_, i) => (
        <text key={i} fontSize="9" fill="#444" textAnchor="end" transform={`translate(${96 + i * 17} 428) rotate(-45)`}>
          {1900 + i * 5}
        </text>
      ))}
      <T x={258} y={455} s={9} mid>year</T>
      <T x={583} y={98} s={12}>Top 15 Nations</T>
      <T x={583} y={114} s={10} fill="#999">(2010)</T>
      <T x={847} y={98} s={12}>Bottom 15 Nations</T>
      <T x={847} y={114} s={10} fill="#999">(2010)</T>
      <NationTable
        x={583}
        c2={690}
        c3={771}
        right={815}
        rows={[["Sweden", "Europe", "7,729"], ["Norway", "Europe", "7,717"], ["Netherlands", "Europe", "7,622"], ["Australia", "Oceania", "7,613"], ["Iceland", "Europe", "7,596"], ["Denmark", "Europe", "7,590"], ["Switzerland", "Europe", "7,529"], ["Canada", "Americas", "7,465"], ["New Zealand", "Oceania", "7,434"], ["United Kingdom", "Europe", "7,379"]]}
      />
      <NationTable
        x={847}
        c2={959}
        c3={1035}
        right={1080}
        rows={[["Tokelau", "Oceania", "69"], ["Sierra Leone", "Africa", "3,456"], ["Mali", "Africa", "3,700"], ["Angola", "Africa", "3,747"], ["South Sudan", "Africa", "3,751"], ["Afghanistan", "Asia", "3,929"], ["Mozambique", "Africa", "4,016"], ["Timor-Leste", "Asia", "4,044"], ["Equatorial Guinea", "Africa", "4,082"], ["Niger", "Africa", "4,089"]]}
      />
      <T x={54} y={494} s={13}>Population at end of each decade</T>
      <T x={335} y={494} s={13}>GDP at end of each decade</T>
      <T x={80} y={517} s={9} fill="#222">sum(population)</T>
      <T x={360} y={517} s={9} fill="#222">avg(gdp_per_capita)</T>
      <path d="M92 526V692H232M372 526V692H512" fill="none" stroke="#777" />
      {["0", "1,000", "2,000", "3,000"].map((v, i) => (
        <T key={v} x={86} y={695 - i * 49} s={9} end>{v}</T>
      ))}
      {["0", "5,000", "10,000", "15,000", "20,000"].map((v, i) => (
        <T key={v} x={366} y={694 - i * 41} s={9} end>{v}</T>
      ))}
      <Series color={SLATE} pts="97,648 112,644 126,640 140,636 154,629 168,618 183,598 197,574 211,548 225,524" />
      <Series color={SILVER} pts="97,676 112,675 126,674 140,672 154,671 168,668 183,667 197,665 211,665 225,664" />
      <Series color={LIGHT_TEAL} pts="97,684 112,683 126,682 140,680 154,678 168,675 183,671 197,667 211,662 225,657" />
      <Series color={TEAL} pts="97,686 112,685 126,684 140,683 154,682 168,679 183,676 197,671 211,664 225,656" />
      <Series color="#ef9a3d" pts="97,691 112,691 126,691 140,691 154,691 168,691 183,691 197,691 211,691 225,691" />
      <Series color={SILVER} pts="378,668 392,666 407,660 421,656 435,650 449,630 463,600 478,570 492,545 506,525" />
      <Series color={SLATE} pts="378,684 392,684 407,682 421,680 435,665 449,645 463,622 478,606 492,616 506,606" />
      <Series color={LIGHT_TEAL} pts="378,682 392,680 407,676 421,672 435,662 449,656 463,640 478,626 492,614 506,602" />
      <Series color="#ef9a3d" pts="378,676 392,674 407,670 421,668 435,658 449,646 463,628 478,614 492,602 506,592" />
      <Series color={TEAL} pts="378,687 392,686 407,685 421,684 435,682 449,680 463,674 478,670 492,671 506,670" />
      <Legend x={257} y={512} items={CONTINENTS} />
      <Legend x={537} y={512} items={CONTINENTS} />
      {[0, 1, 2, 3, 4].map((i) => (
        <g key={i}>
          <T x={94 + i * 29} y={705} s={8}>{i * 20}</T>
          <T x={374 + i * 29} y={705} s={8}>{i * 20}</T>
        </g>
      ))}
      <T x={134} y={719} s={9} mid>decade (1900s)</T>
      <T x={414} y={719} s={9} mid>decade (1900s)</T>
      <T x={619} y={514} s={19} bold fill="#222">World Life Expectancy</T>
      <g fontFamily="Open Sans, sans-serif">
        <T x={619} y={546} s={12} fill="#222">Life expectancy of the world has changed dramatically over the past 100 years.</T>
        <T x={619} y={561} s={12} fill="#222">This app explores that trend across the world's regions, and in doing so we see</T>
        <T x={619} y={577} s={12} fill="#222">some interesting patterns. Compare this data with GDP across the same time</T>
        <T x={619} y={592} s={12} fill="#222">periods and regions.</T>
        <T x={619} y={622} s={11} bold fill="#222">Click on specific region on the multi-line chart on the left to see data only for</T>
        <T x={619} y={637} s={11} bold fill="#222">that region and year</T>
        <T x={619} y={675} s={10} bold fill="#222">source :</T>
        <T x={662} y={675} s={11} fill="#222">gapminder.org</T>
      </g>
      <T x={54} y={758} s={13}>Avg GDP per capita</T>
      <T x={54} y={774} s={10} fill="#999">(2010)</T>
      <T x={80} y={794} s={9} fill="#222">sum(gdp_per_capita)</T>
      {["80,000", "70,000", "60,000"].map((v, i) => (
        <T key={v} x={87} y={829 + i * 26} s={9} end>{v}</T>
      ))}
      <path d="M92 802V900" stroke="#777" />
      <path d="M95 803h7v97h-7zM119 852h7v48h-7z" fill={TEAL} />
      <path d="M103 822h7v78h-7zM127 884h7v16h-7z" fill={LIGHT_TEAL} />
      <path d="M111 850h7v50h-7z" fill={SLATE} />
      <Legend x={559} y={789} items={[["A", "#ef9a3d"], ["A", SLATE], ["A", LIGHT_TEAL], ["E", TEAL], ["O", LIGHT_TEAL]]} />
      <rect x="583" y="778" width="8" height="120" fill="#ccc" />
      <T x={600} y={758} s={12}>GDP vs Life Expectancy</T>
      <T x={600} y={774} s={10} fill="#999">(2010)</T>
      <T x={638} y={794} s={9} fill="#222">avg(gdp_per_capita)</T>
      {["24,000", "22,000", "20,000"].map((v, i) => (
        <g key={v}>
          <T x={643} y={825 + i * 27} s={9} end>{v}</T>
          <path d={`M650 ${822 + i * 27}H1010`} stroke="#e6e6e6" />
        </g>
      ))}
      <path d="M650 802V900" stroke="#777" />
      <path d="M685 802V900M720 802V900M756 802V900M791 802V900M826 802V900M862 802V900M897 802V900M932 802V900M967 802V900M1002 802V900" stroke="#e6e6e6" />
      <circle cx="995" cy="817" r="6" fill={SILVER} />
      <Legend x={1020} y={789} items={CONTINENTS} />
    </Thumb>
  );
}

function PopulationThumb() {
  return (
    <Thumb box="0 0 1092 870" label="US State Population Trends preview">
      <rect x="14" y="14" width="1064" height="856" fill="#ececec" />
      <T x={24} y={42} s={18}>US State Population Trends</T>
      <Tools x={994} y={26} />
      <path d="M28 64h316v806H28zM358 64h710v806H358z" fill="#fff" />
      <T x={34} y={84} s={13}>2010 State Populations in a map</T>
      <T x={364} y={84} s={13}>US State Populations over time</T>
    </Thumb>
  );
}

function CensusThumb() {
  return (
    <Thumb box="0 0 1092 870" label="Census Dashboard preview">
      <rect x="14" y="8" width="1064" height="6" fill="#e2e2e2" />
      <T x={24} y={40} s={18} fill="#444">Census Dashboard</T>
      <Tools x={1000} y={26} />
      <T x={24} y={75} s={13} bold fill="#222">Exploring the US population</T>
      <T x={566} y={73} s={13} bold fill="#222">State</T>
    </Thumb>
  );
}

function ThreatsThumb() {
  return (
    <Thumb box="0 0 1092 870" label="Global Threats preview">
      <rect x="14" y="6" width="1064" height="3" fill="#ececec" />
      <T x={18} y={40} s={18} fill="#888">Global Threats</T>
      <g opacity="0.4">
        <Tools x={1034} y={26} />
      </g>
      <path d="M14 47h1064" stroke="#eee" strokeWidth="2" />
      <path d="M16 56h320v800H16zM348 56h320v800H348zM676 56h320v800H676z" fill="none" stroke="#eee" strokeWidth="2" />
      <T x={22} y={78} s={13} fill="#888">Malware Distribution</T>
      <T x={356} y={78} s={13} fill="#888">Botnet</T>
      <T x={690} y={78} s={13} fill="#888">Scanning</T>
    </Thumb>
  );
}

/* ---------- page parts ---------- */
function NavItem({ label, active }: { label: string; active?: boolean }) {
  return (
    <a
      href="#"
      aria-current={active ? "page" : undefined}
      className={
        active
          ? "relative flex items-center bg-[#212427] px-[27px] pt-[4px] text-white after:absolute after:inset-x-0 after:top-full after:h-[6px] after:bg-[#69aef5]"
          : "flex items-center px-[27px] pt-[4px] text-[#c4c7c9]"
      }
    >
      {label}
    </a>
  );
}

function Header() {
  return (
    <header className="relative z-20 flex h-[104px] shrink-0 bg-[#1a242a]">
      <a href="#" className="block w-[506px] shrink-0 pl-[44px] pt-[12px] text-white">
        <span className="flex h-[34px] items-center gap-[2px] font-['Lato'] text-[34px] font-black leading-[34px]">
          <span className="tracking-[2px]">CLOUD</span>
          <svg viewBox="0 0 20 25" className="h-[25px] w-[20px]" fill="#fff" role="img" aria-label="E">
            <path d="M0 0h20v5H4zM4 10h13v5H4zM0 25h20v-5H4z" />
          </svg>
          <span className="pl-[3px] tracking-[1px]">RA</span>
        </span>
        <span className="block text-[32px] leading-[40px]">Data Visualization</span>
      </a>
      <nav className="flex shrink-0 text-[26px] font-light tracking-[2px]">
        <NavItem label="HOME" />
        <NavItem label="SQL" />
        <NavItem label="VISUALS" active />
        <NavItem label="DATA" />
      </nav>
      <div className="ml-[41px] mt-[27px] flex h-[54px] w-[548px] items-center rounded-[4px] border-2 border-[#777a7c] bg-[#303437] pl-[9px] pr-[10px]">
        <Glyph name="search" className="mt-[6px] h-[28px] w-[28px] shrink-0 text-[#aaa]" />
        <input
          type="text"
          aria-label="Search"
          placeholder="find titles, viz types, datasets, authors..."
          className="mx-[11px] min-w-0 flex-1 bg-transparent pt-[2px] text-[24px] text-white outline-none placeholder:text-[#72757a]"
        />
        <button type="button" aria-label="Clear search" className="shrink-0 pt-2 text-[#ddd]">
          <Glyph name="clear" className="h-[32px] w-[32px]" />
        </button>
      </div>
    </header>
  );
}

function ActionButton({ icon, label, caret }: { icon: ReactNode; label: string; caret?: boolean }) {
  return (
    <button
      type="button"
      className="flex h-[48px] shrink-0 items-center whitespace-nowrap rounded-[4px] border-2 border-[#999] bg-[#ececec] px-[30px] pt-[5px] text-[24px] text-[#999]"
    >
      {icon}
      <span>{label}</span>
      {caret && <span className="mb-2 ml-[6px] border-x-[7px] border-t-[7px] border-x-transparent border-t-[#999]" />}
    </button>
  );
}

function Toolbar() {
  return (
    <div className="relative z-10 flex h-[72px] shrink-0 items-start overflow-hidden border-b-2 border-[#c8c8c8] bg-[#f1f1f1] pl-[50px] pt-[14px]">
      <button
        type="button"
        className="flex h-[46px] shrink-0 items-center gap-[6px] whitespace-nowrap rounded-[4px] border-2 border-[#999] bg-[#6ab3bf] pl-[35px] pr-[29px] pt-[3px] text-[24px] font-medium text-white"
      >
        <span className="pb-[3px]">
          <NewDashboardIcon />
        </span>
        NEW DASHBOARD
      </button>
      <button
        type="button"
        className="ml-[10px] flex h-[46px] shrink-0 items-center gap-[6px] whitespace-nowrap rounded-[4px] border-2 border-[#999] bg-[#b186b9] pl-[35px] pr-[30px] pt-[3px] text-[24px] font-medium text-white"
      >
        <span className="pb-[3px]">
          <NewAppIcon />
        </span>
        NEW APP
      </button>
      <div className="ml-[130px] flex shrink-0 items-center gap-[10px]">
        <span className="whitespace-nowrap pt-[8px] text-[28px] leading-[40px] text-[#999]">Action on Selected Items:</span>
        <ActionButton
          caret
          label="MOVE TO WORKSPACE"
          icon={
            <svg viewBox="0 0 22 22" className="mb-1 mr-[6px] h-[22px] w-[22px]" aria-hidden="true">
              <circle cx="11" cy="11" r="9" fill="none" stroke="#999" strokeWidth="3" />
              <path d="M5 9h6V5l6 6-6 6v-4H5z" fill="#999" />
            </svg>
          }
        />
        <ActionButton label="EXPORT" icon={<Glyph name="share" className="mb-2 mr-[4px] h-[25px] w-[25px]" />} />
        <ActionButton
          label="DELETE"
          icon={<Glyph name="trash" box="192 128 1408 1536" className="mb-1 mr-[6px] h-[22px] w-[20px]" />}
        />
      </div>
    </div>
  );
}

function SideItem({ icon, label, count, active }: { icon: ReactNode; label: string; count: number; active?: boolean }) {
  return (
    <a
      href="#"
      className={
        active
          ? "flex h-[72px] items-center bg-[#9ba0a4] pl-[16px] pr-[20px] text-white"
          : "mr-[2px] flex h-[72px] items-center pl-[16px] pr-[18px] text-[#333]"
      }
    >
      <span className="flex w-[34px] shrink-0 items-center">{icon}</span>
      <span className="flex-1">{label}</span>
      <span
        className={
          active
            ? "mt-1 rounded-full bg-white px-[14px] text-[24px] font-bold leading-[36px] text-[#666]"
            : "mt-1 rounded-full bg-[#ccc] px-[14px] text-[24px] font-bold leading-[36px] text-white"
        }
      >
        {count}
      </span>
    </a>
  );
}

function Sidebar() {
  return (
    <aside className="relative w-[476px] shrink-0 pt-[20px] text-[28px] after:absolute after:inset-y-0 after:right-0 after:-z-10 after:w-[2px] after:bg-[#b8b8b8]">
      <SideItem active label="All" count={18} icon={<FaGlobeAmericas className="ml-[1px] h-[26px] w-[26px]" />} />
      <SideItem label="My Favorites" count={0} icon={<Glyph name="star" className="h-[28px] w-[28px]" />} />
      <div className="mt-[22px] border-t-2 border-[#ddd]" />
      <div className="mb-[6px] flex h-[68px] items-center pl-[16px] pr-[26px] text-[#666]">
        <svg viewBox="0 0 26 26" className="mr-[8px] h-[26px] w-[26px]" fill="currentColor" aria-hidden="true">
          <rect width="21" height="21" rx="2" />
          <path d="M23 5h1a2 2 0 0 1 2 2v17a2 2 0 0 1-2 2H9a1 1 0 0 1-1-2h14a1 1 0 0 0 1-1z" />
        </svg>
        <span className="flex-1">WORKSPACES</span>
        <button type="button" aria-label="Add workspace" className="pt-1 text-[#4a87c1]">
          <Glyph name="plus" className="h-[30px] w-[30px]" />
        </button>
      </div>
      <SideItem label="Public" count={17} icon={<UsersIcon />} />
      <SideItem label="Private" count={1} icon={<Glyph name="lock" className="ml-[1px] h-[28px] w-[28px]" />} />
    </aside>
  );
}

function Card({ thumb, title, hovered }: { thumb: ReactNode; title: ReactNode; hovered?: boolean }) {
  return (
    <article
      className={
        hovered
          ? "relative min-h-[390px] rounded-[4px] bg-white shadow-[0_4px_14px_rgba(0,0,0,0.55)]"
          : "relative min-h-[390px] rounded-[4px] bg-white shadow-[0_1px_5px_rgba(0,0,0,0.35)]"
      }
    >
      {thumb}
      <h2 className="px-[24px] pt-[11px] text-center text-[28px] font-light leading-[36px] text-[#555]">{title}</h2>
      {hovered && (
        <button
          type="button"
          aria-label="Select"
          className="absolute right-[14px] top-[14px] flex h-[40px] w-[40px] items-center justify-center rounded-full border-2 border-[#ccc] bg-white/90 text-[#d8d8d8]"
        >
          <Glyph name="check" className="h-[22px] w-[22px]" />
        </button>
      )}
      {hovered ? (
        <button
          type="button"
          aria-label="Edit"
          className="absolute bottom-[2px] right-[2px] flex h-[52px] w-[52px] items-center justify-center rounded-[5px] border-2 border-[#4a87c1] bg-white text-[#4a87c1]"
        >
          <Glyph name="pencil" className="h-[30px] w-[30px]" />
        </button>
      ) : (
        <span className="absolute bottom-[2px] right-[2px] flex h-[52px] w-[52px] items-center justify-center rounded-[5px] bg-[#6ab3bf] text-white">
          <DashboardIcon className="h-[25px] w-[25px]" />
        </span>
      )}
    </article>
  );
}

function Filters() {
  return (
    <div className="mt-[21px] flex items-center">
      <div className="flex h-[60px] overflow-hidden rounded-[4px] border-2 border-[#4a87c1] bg-white text-[24px] font-medium text-[#555]">
        <button type="button" aria-pressed="true" className="bg-[#4a87c1] px-[31px] text-white">
          ALL
        </button>
        <button type="button" className="flex items-center gap-[8px] px-[32px]">
          <DashboardIcon className="mb-1 h-[21px] w-[21px]" />
          DASHBOARDS
        </button>
        <button type="button" className="flex items-center gap-[6px] border-l-2 border-[#4a87c1] px-[30px]">
          <AppIcon className="mb-1 h-[24px] w-[24px]" />
          APPS
        </button>
      </div>
      <button type="button" aria-label="Grid view" className="ml-[56px]">
        <GridIcon />
      </button>
      <button type="button" aria-label="List view" className="ml-[19px]">
        <ListIcon />
      </button>
    </div>
  );
}

function PointerArrow({ className, shaft }: { className: string; shaft: number }) {
  const w = shaft + 74;
  return (
    <svg viewBox={`0 0 ${w} 74`} width={w} height="74" className={className} fill="#f09937" aria-hidden="true">
      <path d={`M0 30H${shaft}V0L${w} 37L${shaft} 74V45H0Z`} />
    </svg>
  );
}

export default function App() {
  return (
    <div className="relative isolate flex h-screen flex-col overflow-hidden bg-[#f4f4f4] font-['Roboto',sans-serif]">
      <Header />
      <Toolbar />
      <div className="flex min-h-0 flex-1">
        <Sidebar />
        <main className="min-w-0 flex-1 overflow-y-auto pb-10 pl-[40px] pr-[32px] pt-[28px] [scrollbar-width:none]">
          <h1 className="text-[50px] font-light leading-[60px] text-[#222]">All</h1>
          <Filters />
          <div className="mt-[48px] grid grid-cols-3 gap-x-[40px] gap-y-[42px]">
            <Card thumb={<FraudThumb />} title="Fraud Demo" />
            <Card
              thumb={<DeficiencyThumb />}
              title={
                <>
                  Deficiency Details: &lt;&lt;county:Queens&gt;&gt;
                  <span className="inline-block w-0 whitespace-nowrap">...</span>
                </>
              }
            />
            <Card hovered thumb={<NycThumb />} title="State of NYC" />
            <Card thumb={<CerealThumb />} title="Cereal Comparisons" />
            <Card thumb={<EarthquakeThumb />} title="Earthquakes Around the World" />
            <Card thumb={<LifeThumb />} title="Life Expectancy Dashboard" />
            <Card thumb={<PopulationThumb />} title="US State Population Trends" />
            <Card thumb={<CensusThumb />} title="Census Dashboard" />
            <Card thumb={<ThreatsThumb />} title="Global Threats" />
          </div>
        </main>
      </div>
      <div className="pointer-events-none absolute inset-x-0 top-[174px] h-[8px] bg-gradient-to-b from-black/20 to-transparent" />
      <PointerArrow shaft={133} className="absolute left-[549px] top-[30px] z-30" />
      <PointerArrow shaft={133} className="absolute left-[341px] top-[555px] z-30" />
    </div>
  );
}
